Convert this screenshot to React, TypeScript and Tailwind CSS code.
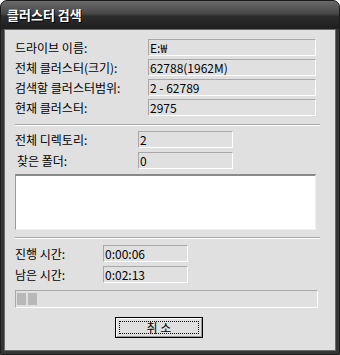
const font = { fontFamily: '"Noto Sans CJK KR", "Liberation Sans", sans-serif' }

function Field({ value, width }: { value: string; width: string }) {
  return (
    <div
      className={`${width} h-[17px] border-t border-l border-t-[#a8a8a8] border-l-[#a8a8a8] border-b border-r border-b-white border-r-white pl-[1px] text-[12px] leading-[16px] text-black`}
    >
      {value}
    </div>
  )
}

function Row({
  label,
  value,
  labelWidth,
  fieldWidth,
  indent = "",
}: {
  label: string
  value: string
  labelWidth: string
  fieldWidth: string
  indent?: string
}) {
  return (
    <div className="flex items-center">
      <div className={`${labelWidth} ${indent} text-[12px] leading-[16px] text-black`}>{label}</div>
      <Field value={value} width={fieldWidth} />
    </div>
  )
}

function Separator() {
  return (
    <div className="w-[305px]">
      <div className="h-px bg-[#a8a8a8]" />
      <div className="h-px bg-white" />
    </div>
  )
}

export default function App() {
  return (
    <div className="w-[340px] h-[355px] bg-white" style={font}>
      <div className="flex flex-col w-[340px] h-[355px] rounded-t-[7px] bg-[#353535] border border-[#1c1c1c]">
        <div className="h-[28px] shrink-0 rounded-t-[6px] bg-[linear-gradient(to_bottom,#6a6a6a,#474747_45%,#2c2c2c_55%,#1e1e1e)] flex items-center pl-[6px]">
          <span className="text-white text-[13px] font-bold leading-[16px] [text-shadow:1px_1px_0_#000]">
            클러스터 검색
          </span>
        </div>
        <div className="flex-1 mx-[3px] mb-[3px] bg-[#e0e0e0] border border-[#6a6a6a] px-[10px] pt-[9px] flex flex-col">
          <div className="flex flex-col gap-[3px]">
            <Row label="드라이브 이름:" value="E:₩" labelWidth="w-[133px]" fieldWidth="w-[168px]" />
            <Row label="전체 클러스터(크기):" value="62788(1962M)" labelWidth="w-[133px]" fieldWidth="w-[168px]" />
            <Row label="검색할 클러스터범위:" value="2 - 62789" labelWidth="w-[133px]" fieldWidth="w-[168px]" />
            <Row label="현재 클러스터:" value="2975" labelWidth="w-[133px]" fieldWidth="w-[168px]" />
          </div>
          <div className="mt-[8px]">
            <Separator />
          </div>
          <div className="mt-[5px] flex flex-col gap-[4px]">
            <Row label="전체 디렉토리:" value="2" labelWidth="w-[123px]" fieldWidth="w-[95px]" />
            <Row label="찾은 폴더:" value="0" labelWidth="w-[123px]" fieldWidth="w-[95px]" indent="pl-[2px]" />
          </div>
          <div className="mt-[5px] w-[301px] h-[56px] bg-white border-t-2 border-l border-t-[#8a8a8a] border-l-[#9a9a9a] border-b border-r border-b-[#f0f0f0] border-r-[#f0f0f0]" />
          <div className="mt-[7px]">
            <Separator />
          </div>
          <div className="mt-[6px] flex flex-col gap-[4px]">
            <Row label="진행 시간:" value="0:00:06" labelWidth="w-[88px]" fieldWidth="w-[85px]" />
            <Row label="남은 시간:" value="0:02:13" labelWidth="w-[88px]" fieldWidth="w-[85px]" />
          </div>
          <div className="mt-[7px] w-[303px] h-[18px] border-t border-l border-t-[#a8a8a8] border-l-[#a8a8a8] border-b border-r border-b-white border-r-white flex items-center gap-[2px] pl-[1px]">
            <div className="w-[9px] h-[12px] bg-[#b8b8b8]" />
            <div className="w-[9px] h-[12px] bg-[#b8b8b8]" />
          </div>
          <div className="mt-[9px] flex justify-center pr-[22px]">
            <button className="w-[88px] h-[21px] border border-black bg-[#e0e0e0] p-0">
              <div className="h-full border-t border-l border-t-white border-l-white border-b border-r border-b-[#9a9a9a] border-r-[#9a9a9a] p-[2px]">
                <div className="h-full border border-dotted border-black flex items-center justify-center text-[12px] leading-[14px] text-black">
                  취 소
                </div>
              </div>
            </button>
          </div>
        </div>
      </div>
    </div>
  )
}
